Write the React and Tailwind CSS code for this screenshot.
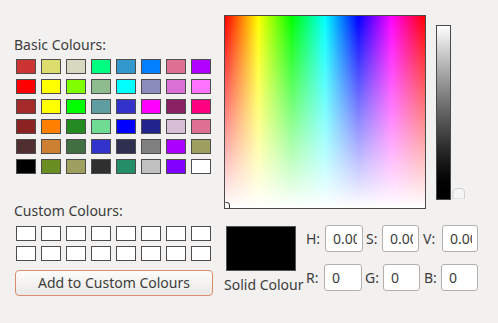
const basic = [
  ['#cc3333', '#dddd6e', '#d8d8c0', '#00ff80', '#3399cc', '#0080ff', '#dd7093', '#b000ff'],
  ['#ff0000', '#ffff00', '#80ff00', '#8fbc8f', '#00ffff', '#8c8cbc', '#da70d6', '#ff73ff'],
  ['#a52a2a', '#ffff00', '#00ff00', '#5f9ea0', '#3333cc', '#ff00ff', '#8b2163', '#ff0080'],
  ['#8b2323', '#ff8000', '#228b22', '#70db93', '#0000ff', '#23238e', '#d8bfd8', '#dd7093'],
  ['#4f2f2f', '#cd7f32', '#426f42', '#3232cd', '#2f2f4f', '#808080', '#aa00ff', '#9f9f5f'],
  ['#000000', '#6b8e23', '#9f9f5f', '#2f2f2f', '#238e68', '#c0c0c0', '#8000ff', '#ffffff'],
];

const Field = ({ value }) => (
  <div className="h-[27px] rounded-[3px] border border-[#b3afab] bg-white pl-[7px] pr-[5px] flex items-center">
    <div className="overflow-hidden whitespace-nowrap w-full">{value}</div>
  </div>
);

export default function App() {
  return (
    <div
      className="w-[498px] h-[323px] bg-[#f2f1f0] flex text-[#3c3c3c] text-[14px] leading-[16px]"
      style={{ fontFamily: '"Noto Sans", "DejaVu Sans", sans-serif' }}
    >
      <div className="w-[224px] pl-[14px] pt-[37px]">
        <div>Basic Colours:</div>
        <div className="ml-[2px] mt-[6px] grid grid-cols-[repeat(8,20px)] gap-x-[5px] gap-y-[5px]">
          {basic.flat().map((c, i) => (
            <div key={i} className="h-[15px] border border-[#4d4d4d]" style={{ backgroundColor: c }} />
          ))}
        </div>
        <div className="mt-[29px]">Custom Colours:</div>
        <div className="ml-[2px] mt-[7px] grid grid-cols-[repeat(8,20px)] gap-x-[5px] gap-y-[5px]">
          {Array.from({ length: 16 }).map((_, i) => (
            <div key={i} className="h-[15px] border border-[#4d4d4d] bg-white" />
          ))}
        </div>
        <button className="ml-[1px] mt-[9px] w-[198px] h-[26px] rounded-[4px] border border-[#dc8b6b] bg-gradient-to-b from-[#fcfcfb] to-[#ebe9e7] text-[#3c3c3c]">
          Add to Custom Colours
        </button>
      </div>

      <div className="pt-[15px]">
        <div className="flex items-start">
          <div className="relative w-[202px] h-[194px] border border-[#4a4a4a] bg-[linear-gradient(to_bottom,rgba(255,255,255,0),#ffffff),linear-gradient(to_right,#ff0000,#ffff00,#00ff00,#00ffff,#0000ff,#ff00ff,#ff0000)]">
            <svg className="absolute left-0 bottom-0" width="6" height="6" viewBox="0 0 6 6">
              <path d="M0.5 0.5 H2 Q4.5 0.5 4.5 3 V6" fill="none" stroke="#333" strokeWidth="1" />
            </svg>
          </div>
          <div className="ml-[10px] mt-[10px] w-[15px] h-[175px] border border-[#4a4a4a] bg-gradient-to-b from-white to-black" />
          <svg className="mt-[172px] ml-[1px]" width="14" height="12" viewBox="0 0 14 12">
            <path d="M1 12 V5 Q1 1.5 5 1.5 H9 Q12.5 1.5 12.5 5 V12 Z" fill="#f5f5f5" stroke="#d2d2d2" strokeWidth="1" />
          </svg>
        </div>

        <div className="flex mt-[16px]">
          <div className="w-[82px]">
            <div className="ml-[2px] mt-[1px] w-[70px] h-[45px] bg-black border border-[#555]" />
            <div className="mt-[6px] whitespace-nowrap">Solid Colour</div>
          </div>
          <div className="flex flex-col gap-y-[12px]">
            <div className="flex items-center">
              <div className="w-[19px]">H:</div>
              <div className="w-[38px]"><Field value="0.00" /></div>
              <div className="w-[19px] pl-[3px]">S:</div>
              <div className="w-[37px]"><Field value="0.00" /></div>
              <div className="w-[23px] pl-[4px]">V:</div>
              <div className="w-[36px]"><Field value="0.00" /></div>
            </div>
            <div className="flex items-center">
              <div className="w-[18px]">R:</div>
              <div className="w-[38px]"><Field value="0" /></div>
              <div className="w-[21px] pl-[3px]">G:</div>
              <div className="w-[37px]"><Field value="0" /></div>
              <div className="w-[21px] pl-[4px]">B:</div>
              <div className="w-[37px]"><Field value="0" /></div>
            </div>
          </div>
        </div>
      </div>
    </div>
  );
}
